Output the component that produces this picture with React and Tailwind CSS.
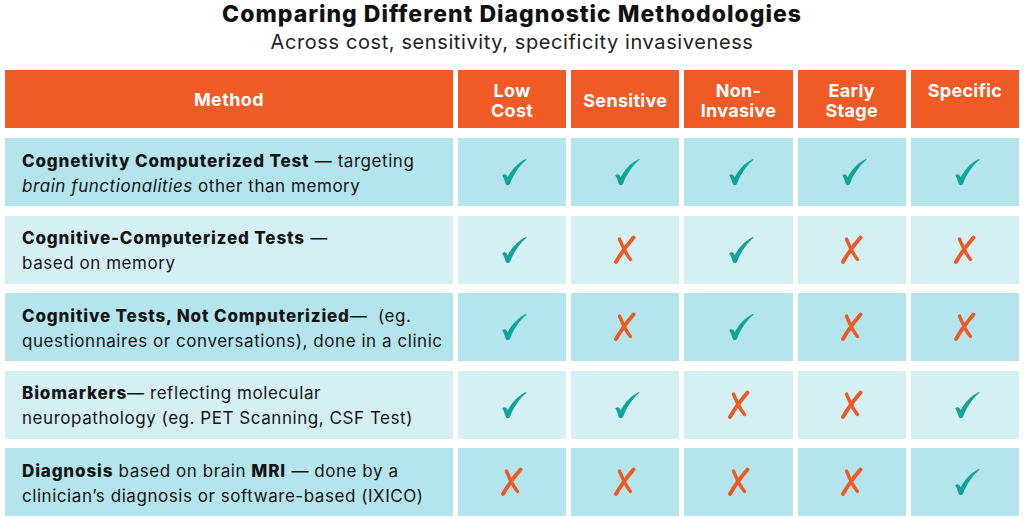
import React from "react";

const Check = () => (
  <svg width="26" height="28" viewBox="0 0 26 28" className="ml-[4px]">
    <path
      d="M1.2 17.5 C3 15.5 5.6 16 6.7 19.3 C10.5 12 16.5 5 24.8 1 C25.5 0.8 25.7 1.5 25.2 2 C18.2 8 12.8 16 9.3 25.2 C8.4 27.6 5.5 27.8 4.6 25.6 C3.8 22.6 2.8 19.8 1.2 17.5 Z"
      fill="#12A39B"
    />
  </svg>
);

const Cross = () => (
  <svg width="24" height="30" viewBox="0 0 24 30">
    <path d="M20.5 2.5 C15 9 8 18 3 27" stroke="#EE5A24" strokeWidth="3.9" strokeLinecap="round" fill="none" />
    <path d="M6.5 4 C9 10 12 18 17.5 24.5" stroke="#EE5A24" strokeWidth="3.4" strokeLinecap="round" fill="none" />
  </svg>
);

const B = ({ children }) => <b className="font-extrabold tracking-[0.85px]">{children}</b>;

const rows = [
  {
    bg: "bg-[#B5E5EC]",
    text: (
      <>
        <B>Cognetivity Computerized Test</B> — targeting
        <br />
        <i>brain functionalities</i> other than memory
      </>
    ),
    v: [1, 1, 1, 1, 1],
  },
  {
    bg: "bg-[#D5F0F4]",
    text: (
      <>
        <B>Cognitive-Computerized Tests</B> —
        <br />
        based on memory
      </>
    ),
    v: [1, 0, 1, 0, 0],
  },
  {
    bg: "bg-[#B5E5EC]",
    text: (
      <>
        <B>Cognitive Tests, Not Computerizied</B>—&nbsp; (eg.
        <br />
        questionnaires or conversations), done in a clinic
      </>
    ),
    v: [1, 0, 1, 0, 0],
  },
  {
    bg: "bg-[#D5F0F4]",
    text: (
      <>
        <B>Biomarkers</B>— reflecting molecular
        <br />
        neuropathology (eg. PET Scanning, CSF Test)
      </>
    ),
    v: [1, 1, 0, 0, 1],
  },
  {
    bg: "bg-[#B5E5EC]",
    text: (
      <>
        <B>Diagnosis</B> based on brain <B>MRI</B> — done by a
        <br />
        clinician’s diagnosis or software-based (IXICO)
      </>
    ),
    v: [0, 0, 0, 0, 1],
  },
];

const heads = [
  <>Low<br />Cost</>,
  <>Sensitive</>,
  <>Non-<br />Invasive</>,
  <>Early<br />Stage</>,
  <>Specific<br />&nbsp;</>,
];

export default function App() {
  return (
    <div
      className="w-[1024px] h-[518px] bg-white overflow-hidden flex flex-col"
      style={{ fontFamily: "Inter, 'Noto Sans', sans-serif" }}
    >
      <div className="text-center text-[23px] leading-[28px] font-extrabold text-[#111] tracking-[1px]">
        Comparing Different Diagnostic Methodologies
      </div>
      <div className="text-center text-[20px] leading-[28px] font-normal text-[#222] tracking-[0.6px]">
        Across cost, sensitivity, specificity invasiveness
      </div>
      <div className="mt-[14px] ml-[5px] w-[1014px] flex flex-col">
        <div className="flex gap-[5px] h-[58px]">
          <div className="w-[448px] bg-[#F05A24] flex items-center justify-center text-white font-bold text-[18px] tracking-[0.4px]">
            Method
          </div>
          {heads.map((h, i) => (
            <div
              key={i}
              className="flex-1 bg-[#F05A24] flex items-center justify-center text-center text-white font-bold text-[18px] leading-[20px] pt-[4px] tracking-[0.3px]"
            >
              <div>{h}</div>
            </div>
          ))}
        </div>
        <div className="flex flex-col gap-[9.5px] mt-[10px]">
          {rows.map((r, i) => (
            <div key={i} className="flex gap-[5px] h-[68px]">
              <div className={`w-[448px] ${r.bg} flex items-center pl-[17px] pt-[3px] text-[17px] leading-[25px] text-[#141414] tracking-[0.55px]`}>
                <div>{r.text}</div>
              </div>
              {r.v.map((v, j) => (
                <div key={j} className={`flex-1 ${r.bg} flex items-center justify-center`}>
                  {v ? <Check /> : <Cross />}
                </div>
              ))}
            </div>
          ))}
        </div>
      </div>
    </div>
  );
}
